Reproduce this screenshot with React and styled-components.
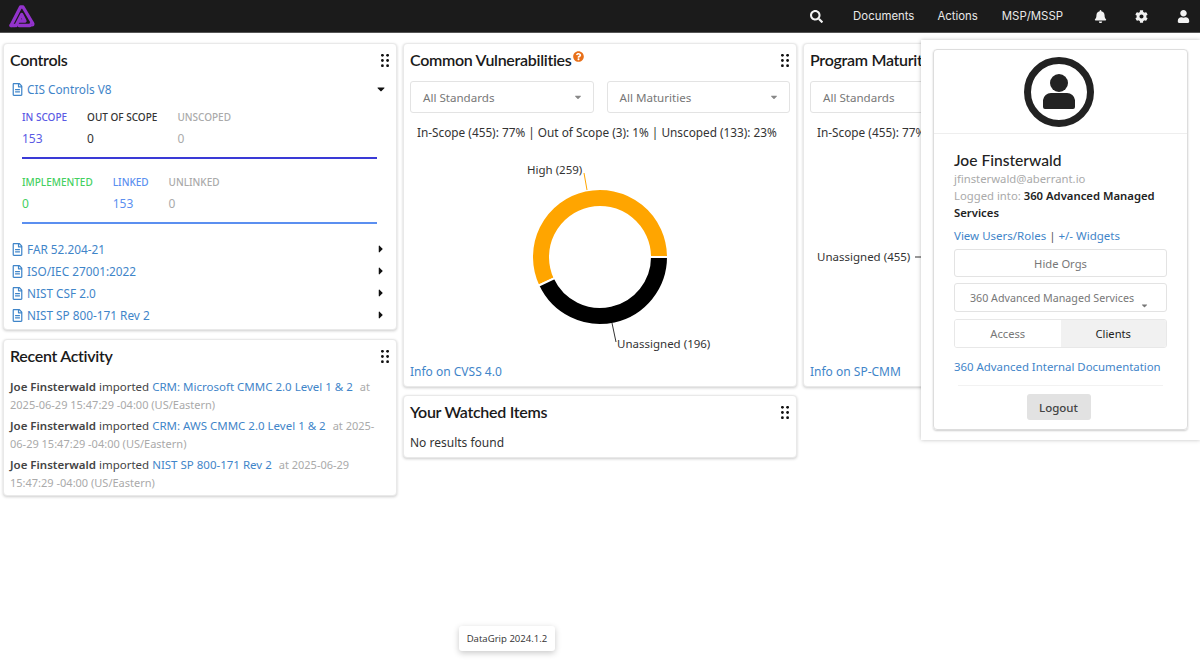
import React from 'react';
import styled, { createGlobalStyle } from 'styled-components';
import {
  FaSearch, FaBell, FaCog, FaUser, FaRegFileAlt, FaCaretDown, FaCaretRight, FaQuestionCircle,
} from 'react-icons/fa';

const GlobalStyle = createGlobalStyle`
  html, body {
    margin: 0;
    padding: 0;
    background: #fff;
    height: 100%;
    overflow: hidden;
  }
  body {
    font-family: "Noto Sans", "Open Sans", sans-serif;
    font-size: 12px;
    color: #333;
  }
  * { box-sizing: border-box; }
`;

const Page = styled.div`
  position: relative;
  width: 1200px;
  height: 660px;
  overflow: hidden;
`;

const NavBar = styled.header`
  height: 33px;
  background: #1b1b1b;
  border-bottom: 1px solid #555;
  display: flex;
  align-items: center;
  justify-content: space-between;
  padding: 0 10px 0 8px;
`;

const NavRight = styled.nav`
  display: flex;
  align-items: center;
  color: #eee;
`;

const NavIcon = styled.span`
  display: flex;
  justify-content: center;
  width: 14px;
  margin-left: ${p => p.$left || 0}px;
  font-size: 13px;
  color: #f2f2f2;
`;

const NavLink = styled.span`
  margin-left: ${p => p.$left}px;
  font-family: Inter, sans-serif;
  font-size: 11.4px;
  color: #e8e8e8;
`;

const Grid = styled.main`
  display: grid;
  grid-template-columns: repeat(3, 394px);
  column-gap: 6px;
  padding: 10px 3px 0;
`;

const Column = styled.div`
  display: flex;
  flex-direction: column;
  gap: ${p => p.$gap || 9}px;
`;

const Card = styled.section`
  background: #fff;
  border: 1px solid #e9e9e9;
  border-radius: 4px;
  box-shadow: 0 1px 3px rgba(0, 0, 0, 0.2);
  padding: 6px;
  height: ${p => p.$h}px;
  display: flex;
  flex-direction: column;
`;

const CardHead = styled.div`
  flex: none;
  display: flex;
  align-items: center;
  justify-content: space-between;
  height: 20px;
  margin-bottom: ${p => p.$mb || 0}px;
`;

const Title = styled.h2`
  margin: -2px 0 0;
  font-family: Lato, sans-serif;
  font-size: 16px;
  font-weight: 600;
  color: #1a1a1a;
  display: flex;
  letter-spacing: -0.3px;
  white-space: nowrap;
`;

const HelpIcon = styled.span`
  font-size: 11px;
  color: #e8701a;
  display: flex;
  margin: 1px 0 0 1px;
`;

const Link = styled.a`
  color: #3f85c9;
  text-decoration: none;
`;

const DocRow = styled.div`
  flex: none;
  display: flex;
  align-items: center;
  height: 22px;
  color: #3f85c9;
  font-size: 11.8px;
  padding-right: 3px;
  > svg:first-child { font-size: 13px; margin-left: 1px; margin-right: 3px; }
  > span { flex: 1; }
  > svg:last-child { font-size: 12px; color: #111; }
`;

const StatBlock = styled.div`
  flex: none;
  padding: 0 13px 0 12px;
  height: ${p => p.$h}px;
  margin-top: ${p => p.$mt || 0}px;
`;

const StatRow = styled.div`
  display: flex;
  gap: 20px;
`;

const StatItem = styled.div`
  color: ${p => p.$color};
`;

const StatLabel = styled.div`
  font-size: 10px;
  font-weight: 500;
  line-height: 14px;
  margin-bottom: 8px;
`;

const StatValue = styled.div`
  font-size: 12px;
  line-height: 14px;
`;

const Bar = styled.div`
  height: 2px;
  background: ${p => p.$color};
  margin-top: 11px;
`;

const ActivityList = styled.div`
  margin-top: 12px;
`;

const ActivityItem = styled.p`
  margin: 0 0 4px;
  line-height: 17.5px;
  font-size: 11.5px;
  color: #444;
  b { font-weight: 600; color: #444; }
  small { font-size: 11px; color: #aaa; margin-left: 4px; }
`;

const SelectRow = styled.div`
  flex: none;
  display: grid;
  grid-template-columns: 1fr 1fr;
  column-gap: 13px;
  margin-top: 11px;
`;

const Select = styled.div`
  height: 32px;
  border: 1px solid #e3e3e3;
  border-radius: 3px;
  padding: 0 12px;
  display: flex;
  align-items: center;
  justify-content: space-between;
  color: #777;
  font-size: 11.6px;
  > svg { font-size: 10px; color: #888; margin-right: -2px; }
`;

const Summary = styled.div`
  flex: none;
  margin: 11px 0 0 7px;
  line-height: 17px;
  color: #333;
  white-space: nowrap;
  font-size: 11.8px;
`;

const ChartWrap = styled.div`
  flex: 1;
  display: flex;
  svg { display: block; font-family: "Noto Sans", sans-serif; font-size: 11.5px; }
`;

const Popover = styled.aside`
  position: absolute;
  left: 921px;
  top: 40px;
  width: 279px;
  height: 400px;
  background: #fff;
  box-shadow: 0 0 4px rgba(0, 0, 0, 0.25);
  padding: 9px 12px;
`;

const ProfileCard = styled.div`
  height: 381px;
  border: 1px solid #ddd;
  border-radius: 4px;
  box-shadow: 0 1px 2px rgba(0, 0, 0, 0.2);
  display: flex;
  flex-direction: column;
`;

const AvatarBox = styled.div`
  height: 84px;
  flex: none;
  border-bottom: 1px solid #eee;
  padding-right: 3px;
  display: flex;
  align-items: center;
  justify-content: center;
`;

const ProfileBody = styled.div`
  padding: 17px 20px 0;
`;

const Name = styled.div`
  font-family: Lato, sans-serif;
  font-size: 15.6px;
  font-weight: 500;
  line-height: 19px;
  color: #222;
`;

const Muted = styled.div`
  color: #aaa;
  font-size: 11.3px;
  line-height: 17px;
  b { color: #222; font-weight: 600; }
`;

const LinkLine = styled.div`
  margin: 6px 0 5px;
  line-height: 17px;
  font-size: 11.5px;
  color: #555;
`;

const OutlineBox = styled.div`
  height: ${p => p.$h}px;
  border: 1px solid #e3e3e3;
  border-radius: 3px;
  margin-bottom: ${p => (p.$select ? 0 : 6)}px;
  padding-left: ${p => (p.$select ? 15 : 0)}px;
  color: #777;
  font-size: ${p => (p.$select ? 10.7 : 11.2)}px;
  display: flex;
  align-items: center;
  justify-content: ${p => (p.$select ? 'flex-start' : 'center')};
  position: relative;
`;

const SelectCaret = styled.span`
  position: absolute;
  right: 17px;
  bottom: 1px;
  display: flex;
  color: #777;
  font-size: 9px;
`;

const Toggle = styled.div`
  display: grid;
  grid-template-columns: 1fr 1fr;
  height: 29px;
  border: 1px solid #e8e8e8;
  border-radius: 3px;
  margin-top: 7px;
  overflow: hidden;
`;

const ToggleItem = styled.div`
  display: flex;
  align-items: center;
  justify-content: center;
  font-size: 11.2px;
  background: ${p => (p.$active ? '#f1f1f1' : '#fff')};
  color: ${p => (p.$active ? '#222' : '#777')};
`;

const DocLink = styled(Link)`
  display: block;
  margin-top: 10px;
  line-height: 17px;
  font-size: 11.4px;
  white-space: nowrap;
`;

const Rule = styled.hr`
  border: 0;
  border-top: 1px solid #f2f2f2;
  margin: 10px 4px 8px;
`;

const LogoutRow = styled.div`
  display: flex;
  justify-content: center;
  padding-right: 4px;
`;

const Logout = styled.button`
  width: 64px;
  height: 26px;
  border: 0;
  border-radius: 3px;
  background: #e2e2e2;
  color: #444;
  font: 500 11.5px "Noto Sans", sans-serif;
`;

const Toast = styled.div`
  position: absolute;
  left: 459px;
  top: 626px;
  width: 96px;
  height: 25px;
  border-radius: 3px;
  background: #fff;
  box-shadow: 0 2px 6px rgba(0, 0, 0, 0.22);
  font-family: "Open Sans", sans-serif;
  font-size: 9.6px;
  color: #333;
  display: flex;
  align-items: center;
  justify-content: center;
`;

const GripIcon = styled.svg`
  margin-right: 1px;
`;

const Logo = () => (
  <svg width="28" height="28" viewBox="0 0 28 28" fill="none" stroke="#9333cc" strokeWidth="3.3" strokeLinejoin="round" strokeLinecap="round">
    <path d="M3 23.5 12.5 5 h2.5 L24.5 21" />
    <path d="M8 23.5 13.7 12.5 l3.3 6.5 H10.5" />
    <path d="M3 23.5 H7 M11 23.5 H22" />
    <circle cx="24" cy="22" r="1.5" strokeWidth="2" />
  </svg>
);

const Grip = () => (
  <GripIcon width="8" height="13" viewBox="0 0 8 13" fill="#111">
    {[1.3, 6.5, 11.7].map(y => [1.4, 6.6].map(x => <circle key={`${x}-${y}`} cx={x} cy={y} r="1.4" />))}
  </GripIcon>
);

const Avatar = () => (
  <svg width="70" height="70" viewBox="0 0 70 70">
    <circle cx="35" cy="35" r="31.5" fill="none" stroke="#222" strokeWidth="7" />
    <circle cx="35" cy="26" r="9" fill="#222" />
    <path d="M19 46 v-3 a8 8 0 0 1 8-7 h16 a8 8 0 0 1 8 7 v7 a2 2 0 0 1-2 2 H21 a2 2 0 0 1-2-2z" fill="#222" />
  </svg>
);

const polar = (cx, cy, r, deg) => [
  cx + r * Math.cos((deg * Math.PI) / 180),
  cy + r * Math.sin((deg * Math.PI) / 180),
];

const slice = (cx, cy, from, to) => {
  const [r1, r2] = [68, 50];
  const a = polar(cx, cy, r1, from);
  const b = polar(cx, cy, r1, to);
  const c = polar(cx, cy, r2, to);
  const d = polar(cx, cy, r2, from);
  const large = to - from > 180 ? 1 : 0;
  return `M${a} A${r1} ${r1} 0 ${large} 1 ${b} L${c} A${r2} ${r2} 0 ${large} 0 ${d}Z`;
};

const VulnChart = () => (
  <svg width="380" height="220" viewBox="410 141 380 220">
    <path d={slice(600, 257, 155, 360)} fill="#ffa500" stroke="#fff" strokeWidth="2" />
    <path d={slice(600, 257, 0, 155)} fill="#000" stroke="#fff" strokeWidth="2" />
    <path d="M587 190 584 173" stroke="#ffa500" fill="none" />
    <path d="M612 323 616 342" stroke="#333" fill="none" />
    <text x="527" y="174" fill="#333">High (259)</text>
    <text x="617" y="348" fill="#333">Unassigned (196)</text>
  </svg>
);

const MaturityChart = () => (
  <svg width="380" height="220" viewBox="810 141 380 220">
    <circle cx="1000" cy="257" r="59" fill="none" stroke="#888" strokeWidth="16" />
    <path d="M915 257 H941" stroke="#333" fill="none" />
    <text x="817" y="261" fill="#333">Unassigned (455)</text>
  </svg>
);

const docs = ['FAR 52.204-21', 'ISO/IEC 27001:2022', 'NIST CSF 2.0', 'NIST SP 800-171 Rev 2'];

const activity = [
  ['CRM: Microsoft CMMC 2.0 Level 1 & 2', 'at 2025-06-29 15:47:29 -04:00 (US/Eastern)'],
  ['CRM: AWS CMMC 2.0 Level 1 & 2', 'at 2025-06-29 15:47:29 -04:00 (US/Eastern)'],
  ['NIST SP 800-171 Rev 2', 'at 2025-06-29 15:47:29 -04:00 (US/Eastern)'],
];

const App = () => (
  <Page>
    <GlobalStyle />
    <NavBar>
      <Logo />
      <NavRight>
        <NavIcon><FaSearch /></NavIcon>
        <NavLink $left={30}>Documents</NavLink>
        <NavLink $left={23}>Actions</NavLink>
        <NavLink $left={24}>MSP/MSSP</NavLink>
        <NavIcon $left={30}><FaBell /></NavIcon>
        <NavIcon $left={27}><FaCog /></NavIcon>
        <NavIcon $left={28}><FaUser /></NavIcon>
      </NavRight>
    </NavBar>

    <Grid>
      <Column>
        <Card $h={287}>
          <CardHead $mb={8}>
            <Title>Controls</Title>
            <Grip />
          </CardHead>
          <DocRow>
            <FaRegFileAlt />
            <span>CIS Controls V8</span>
            <FaCaretDown />
          </DocRow>
          <StatBlock $h={65} $mt={10}>
            <StatRow>
              <StatItem $color="#5a5ae4"><StatLabel>IN SCOPE</StatLabel><StatValue>153</StatValue></StatItem>
              <StatItem $color="#333"><StatLabel>OUT OF SCOPE</StatLabel><StatValue>0</StatValue></StatItem>
              <StatItem $color="#aaa"><StatLabel>UNSCOPED</StatLabel><StatValue>0</StatValue></StatItem>
            </StatRow>
            <Bar $color="#3a3ad6" />
          </StatBlock>
          <StatBlock $h={63}>
            <StatRow>
              <StatItem $color="#45d05f"><StatLabel>IMPLEMENTED</StatLabel><StatValue>0</StatValue></StatItem>
              <StatItem $color="#5b8ff0"><StatLabel>LINKED</StatLabel><StatValue>153</StatValue></StatItem>
              <StatItem $color="#aaa"><StatLabel>UNLINKED</StatLabel><StatValue>0</StatValue></StatItem>
            </StatRow>
            <Bar $color="#5b8ff0" />
          </StatBlock>
          {docs.map(d => (
            <DocRow key={d}>
              <FaRegFileAlt />
              <span>{d}</span>
              <FaCaretRight />
            </DocRow>
          ))}
        </Card>
        <Card $h={157}>
          <CardHead>
            <Title>Recent Activity</Title>
            <Grip />
          </CardHead>
          <ActivityList>
            {activity.map(([name, when]) => (
              <ActivityItem key={name}>
                <b>Joe Finsterwald</b> imported <Link>{name}</Link> <small>{when}</small>
              </ActivityItem>
            ))}
          </ActivityList>
        </Card>
      </Column>

      <Column $gap={8}>
        <Card $h={344}>
          <CardHead>
            <Title>Common Vulnerabilities<HelpIcon><FaQuestionCircle /></HelpIcon></Title>
            <Grip />
          </CardHead>
          <SelectRow>
            <Select>All Standards<FaCaretDown /></Select>
            <Select>All Maturities<FaCaretDown /></Select>
          </SelectRow>
          <Summary>In-Scope (455): 77% | Out of Scope (3): 1% | Unscoped (133): 23%</Summary>
          <ChartWrap><VulnChart /></ChartWrap>
          <Link>Info on CVSS 4.0</Link>
        </Card>
        <Card $h={63}>
          <CardHead $mb={12}>
            <Title>Your Watched Items</Title>
            <Grip />
          </CardHead>
          No results found
        </Card>
      </Column>

      <Column>
        <Card $h={344}>
          <CardHead>
            <Title>Program Maturity</Title>
            <Grip />
          </CardHead>
          <SelectRow>
            <Select>All Standards<FaCaretDown /></Select>
            <Select>All Maturities<FaCaretDown /></Select>
          </SelectRow>
          <Summary>In-Scope (455): 77% | Out of Scope (3): 1% | Unscoped (133): 23%</Summary>
          <ChartWrap><MaturityChart /></ChartWrap>
          <Link>Info on SP-CMM</Link>
        </Card>
      </Column>
    </Grid>

    <Popover>
      <ProfileCard>
        <AvatarBox><Avatar /></AvatarBox>
        <ProfileBody>
          <Name>Joe Finsterwald</Name>
          <Muted>jfinsterwald@aberrant.io</Muted>
          <Muted>Logged into: <b>360 Advanced Managed Services</b></Muted>
          <LinkLine><Link>View Users/Roles</Link> | <Link>+/- Widgets</Link></LinkLine>
          <OutlineBox $h={28}>Hide Orgs</OutlineBox>
          <OutlineBox $h={29} $select>
            360 Advanced Managed Services
            <SelectCaret><FaCaretDown /></SelectCaret>
          </OutlineBox>
          <Toggle>
            <ToggleItem>Access</ToggleItem>
            <ToggleItem $active>Clients</ToggleItem>
          </Toggle>
          <DocLink>360 Advanced Internal Documentation</DocLink>
          <Rule />
          <LogoutRow><Logout>Logout</Logout></LogoutRow>
        </ProfileBody>
      </ProfileCard>
    </Popover>

    <Toast>DataGrip 2024.1.2</Toast>
  </Page>
);

export default App;
